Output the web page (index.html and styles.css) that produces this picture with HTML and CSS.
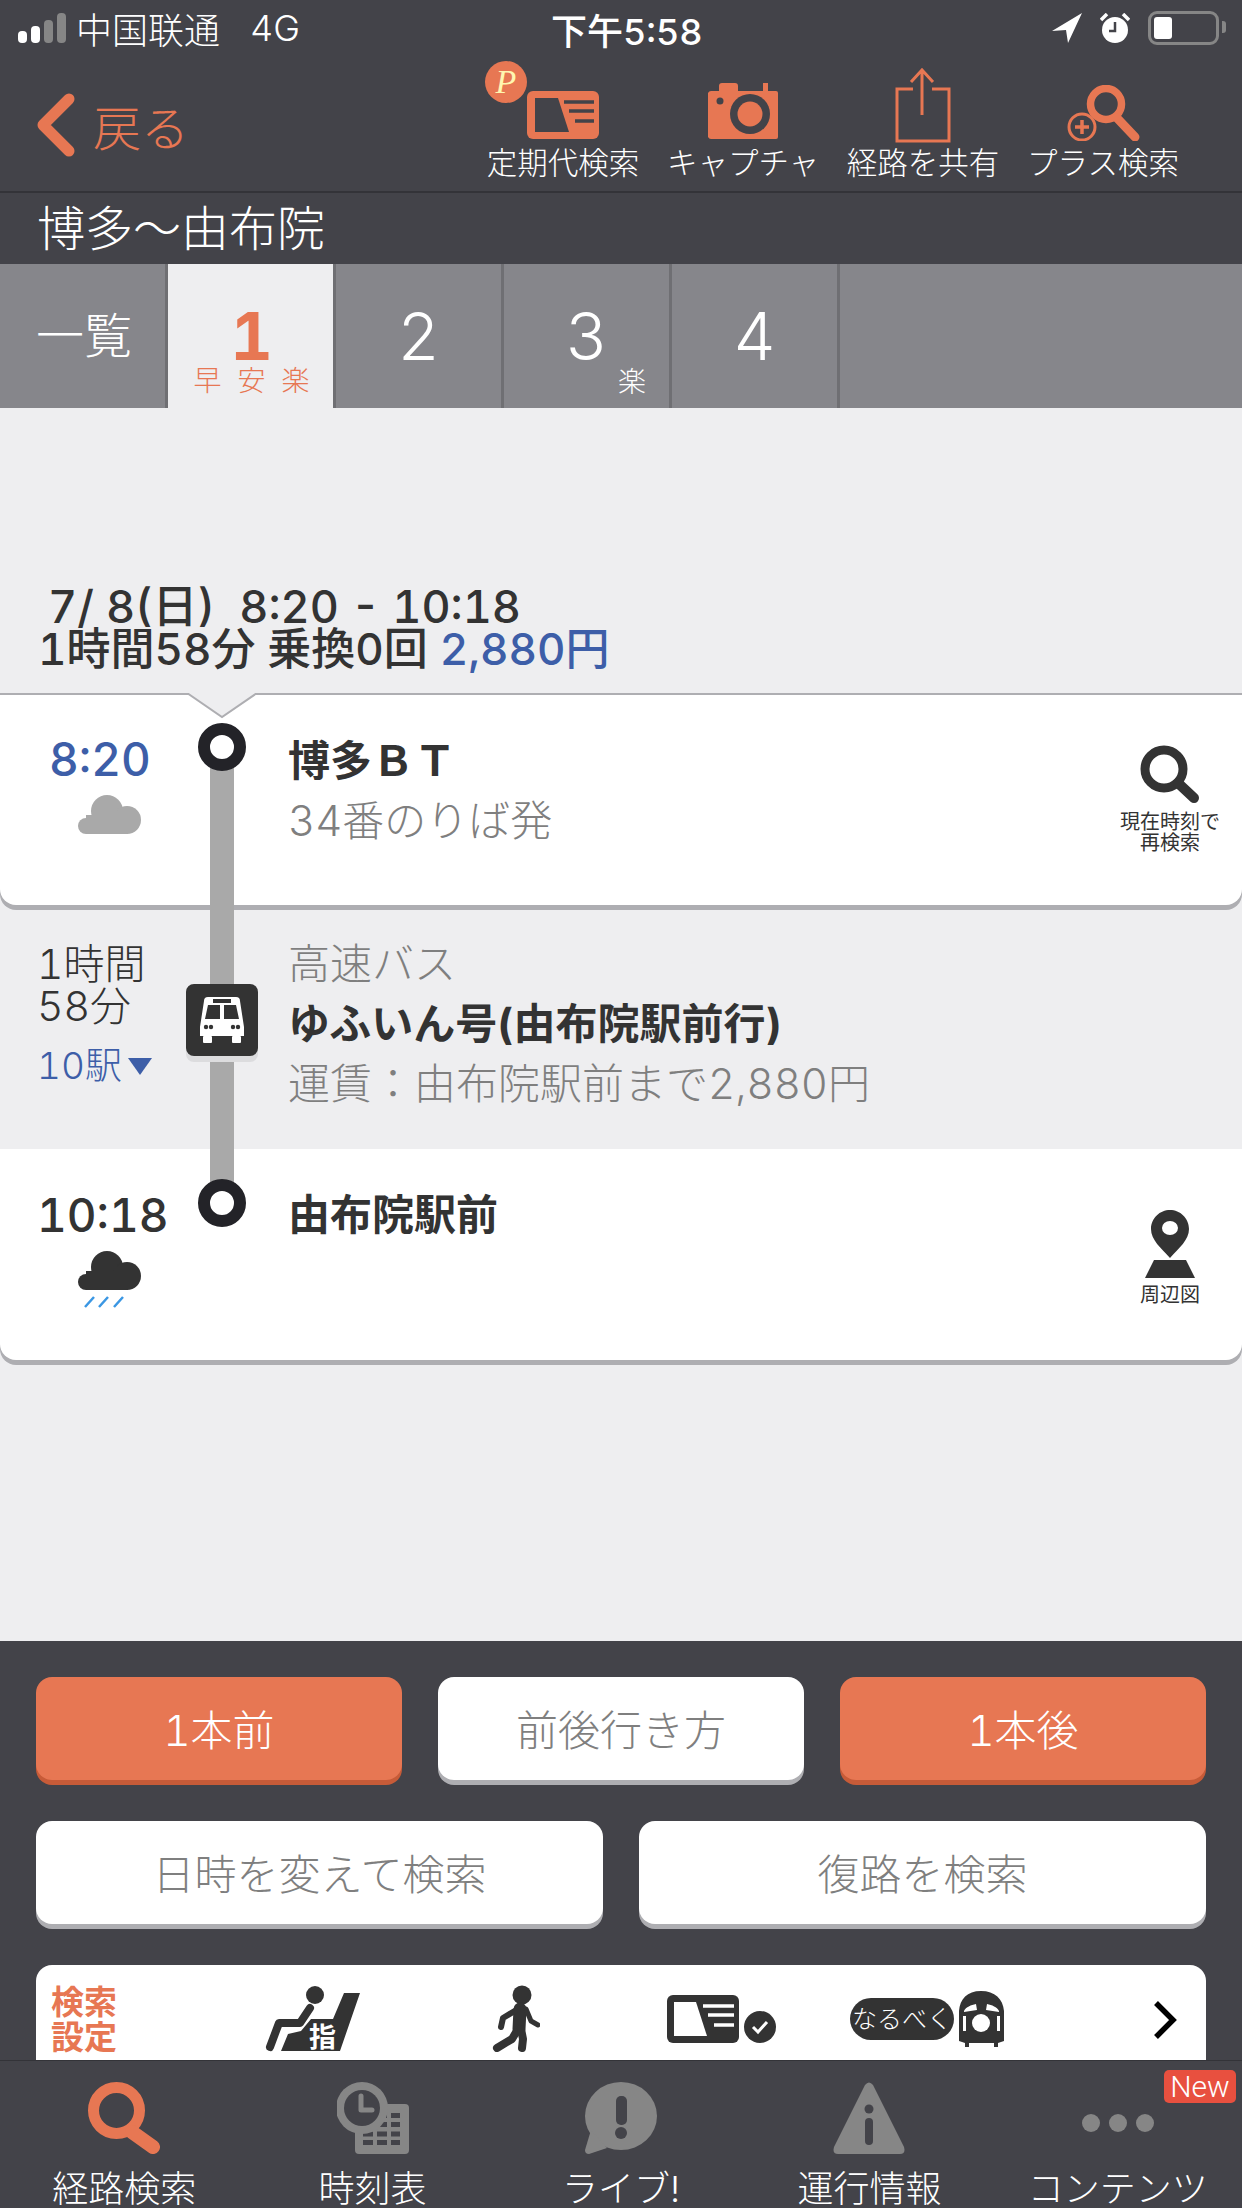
FILE: index.html
```html
<!DOCTYPE html>
<html lang="ja">
  <head>
    <meta charset="UTF-8" />
    <title>博多〜由布院</title>
    <link rel="stylesheet" href="styles.css">
  </head>
  <body>
    <header class="top">
      <div class="status">
        <div class="status-left">
          <span class="signal"><i class="on s1"></i><i class="on s2"></i><i class="s3"></i><i class="s4"></i></span>
          <span class="carrier">中国联通</span>
          <span class="net">4G</span>
        </div>
        <div class="clock">下午5:58</div>
        <div class="status-right">
          <svg width="30" height="30" viewBox="0 0 30 30"><path d="M0 18 30 0 16 30 14 17z" fill="#fff"/></svg>
          <svg width="30" height="30" viewBox="0 0 30 30">
            <circle cx="15" cy="17" r="13" fill="#fff"/>
            <path d="M15 9v9H9" fill="none" stroke="#434349" stroke-width="2.5"/>
            <path d="M1 7 7 1M29 7 23 1" stroke="#fff" stroke-width="3.5"/>
          </svg>
          <span class="battery"><i></i></span>
        </div>
      </div>
      <nav class="nav">
        <a class="back">
          <svg width="38" height="64" viewBox="0 0 38 64"><path d="M32 6 6 32l26 26" fill="none" stroke="#e77753" stroke-width="11" stroke-linecap="round" stroke-linejoin="round"/></svg>
          <span>戻る</span>
        </a>
        <div class="actions">
          <a class="action">
            <span class="action-icon">
              <span class="p-badge">P</span>
              <svg class="pass-icon" width="72" height="48" viewBox="0 0 72 48">
                <rect width="72" height="48" rx="6" fill="#e77753"/>
                <path d="M8 7h23l11 34H8z" fill="#434349"/>
                <path d="M37 11h30M42 20h25M48 30h19" stroke="#434349" stroke-width="3.5"/>
              </svg>
            </span>
            <span>定期代検索</span>
          </a>
          <a class="action">
            <span class="action-icon">
              <svg width="71" height="56" viewBox="0 0 71 56">
                <path d="M3 8h8V3q0-3 3-3h13q3 0 3 3v5h25V0h5v8h8q2 0 2 2v44q0 2-2 2H3q-2 0-3-2V10q1-2 3-2z" fill="#e77753"/>
                <circle cx="42" cy="31" r="20" fill="#434349"/>
                <circle cx="42" cy="31" r="12.5" fill="#e77753"/>
                <circle cx="12" cy="18" r="3.5" fill="#434349"/>
              </svg>
            </span>
            <span>キャプチャ</span>
          </a>
          <a class="action">
            <span class="action-icon">
              <svg class="icon-share" width="56" height="76" viewBox="0 0 56 76">
                <path d="M18 22H2v52h52V22H37M27 48V3M16 15 27 3l11 12" fill="none" stroke="#e77753" stroke-width="3"/>
              </svg>
            </span>
            <span>経路を共有</span>
          </a>
          <a class="action">
            <span class="action-icon">
              <svg class="icon-plus" width="73" height="56" viewBox="0 0 73 56">
                <circle cx="39" cy="19" r="15.5" fill="none" stroke="#e77753" stroke-width="7.5"/>
                <path d="M50 33 68 52" stroke="#e77753" stroke-width="9" stroke-linecap="round"/>
                <circle cx="15" cy="42" r="13" fill="#434349" stroke="#e77753" stroke-width="3"/>
                <path d="M15 35v14M8 42h14" stroke="#e77753" stroke-width="3.5"/>
              </svg>
            </span>
            <span>プラス検索</span>
          </a>
        </div>
      </nav>
      <h1 class="title">博多〜由布院</h1>
    </header>

    <div class="tabs">
      <div class="tab tab-list">一覧</div>
      <div class="tab active">
        <b>1</b>
        <small>早安楽</small>
      </div>
      <div class="tab">2</div>
      <div class="tab">3<small class="tab-tag">楽</small></div>
      <div class="tab">4</div>
      <div class="tab-rest"></div>
    </div>

    <main class="main">
      <div class="summary">
        <p class="summary-date">7/ 8(日)&nbsp; 8:20 - 10:18</p>
        <p>1時間58分 乗換0回 <span class="blue">2,880円</span></p>
      </div>

      <div class="route">
        <div class="route-line"></div>

        <section class="row card card-first">
          <svg class="notch" width="72" height="26" viewBox="0 0 72 26"><path d="M1 0 36 24 71 0" fill="#eeeef0" stroke="#aeaeb2" stroke-width="2"/></svg>
          <div class="time-col dep">
            <div class="time blue">8:20</div>
            <svg class="weather" width="64" height="40" viewBox="0 0 64 40" fill="#a9a9a9">
              <circle cx="29" cy="16" r="16"/><circle cx="49" cy="25" r="14"/><circle cx="8" cy="31" r="8"/><rect x="8" y="20" width="42" height="19"/>
            </svg>
          </div>
          <div class="axis"><span class="stop"></span></div>
          <div class="info">
            <div class="strong">博多ＢＴ</div>
            <div class="sub">34番のりば発</div>
          </div>
          <div class="side">
            <svg width="60" height="60" viewBox="0 0 60 60">
              <circle cx="24" cy="24" r="19" fill="none" stroke="#333" stroke-width="9"/>
              <path d="M38 38 54 53" stroke="#333" stroke-width="10" stroke-linecap="round"/>
            </svg>
            <span>現在時刻で<br>再検索</span>
          </div>
        </section>

        <section class="row leg">
          <div class="time-col">
            <div class="duration">1時間<br>58分</div>
            <div class="stations">10駅<i class="down"></i></div>
          </div>
          <div class="axis">
            <span class="bus">
              <svg width="46" height="46" viewBox="0 0 46 46">
                <path d="M9 0h28q4 0 4 4l4 26v9H1v-9L5 4q0-4 4-4z" fill="#fff"/>
                <rect x="14" y="2" width="18" height="4" fill="#333"/>
                <path d="M9 8h12v14H6zM25 8h12l3 14H25z" fill="#333"/>
                <circle cx="7" cy="30" r="2.2" fill="#333"/><circle cx="12" cy="30" r="2.2" fill="#333"/>
                <circle cx="34" cy="30" r="2.2" fill="#333"/><circle cx="39" cy="30" r="2.2" fill="#333"/>
                <rect x="4" y="39" width="9" height="7" rx="1" fill="#fff"/><rect x="33" y="39" width="9" height="7" rx="1" fill="#fff"/>
              </svg>
            </span>
          </div>
          <div class="info">
            <div class="sub">高速バス</div>
            <div class="strong">ゆふいん号(由布院駅前行)</div>
            <div class="sub">運賃：由布院駅前まで2,880円</div>
          </div>
        </section>

        <section class="row card card-last">
          <div class="time-col arr">
            <div class="time">10:18</div>
            <svg class="weather" width="64" height="58" viewBox="0 0 64 58">
              <g fill="#333"><circle cx="29" cy="16" r="16"/><circle cx="49" cy="25" r="14"/><circle cx="8" cy="31" r="8"/><rect x="8" y="20" width="42" height="19"/></g>
              <path d="M7 56 16 46M21 56 30 46M36 56 45 46" stroke="#3b97e3" stroke-width="2.5"/>
            </svg>
          </div>
          <div class="axis"><span class="stop"></span></div>
          <div class="info">
            <div class="strong">由布院駅前</div>
          </div>
          <div class="side side-map">
            <svg width="50" height="68" viewBox="0 0 50 68">
              <path d="M25 0c10 0 19 8 19 19 0 11-10 19-19 29C16 38 6 30 6 19 6 8 15 0 25 0z" fill="#333"/>
              <ellipse cx="25" cy="18" rx="8" ry="7" fill="#fff"/>
              <path d="M9 50h32l9 18H0z" fill="#333"/>
            </svg>
            <span>周辺図</span>
          </div>
        </section>
      </div>
    </main>

    <section class="panel">
      <div class="btn-row three">
        <a class="btn orange">1本前</a>
        <a class="btn">前後行き方</a>
        <a class="btn orange">1本後</a>
      </div>
      <div class="btn-row two">
        <a class="btn">日時を変えて検索</a>
        <a class="btn">復路を検索</a>
      </div>
      <div class="settings">
        <div class="settings-label">検索<br>設定</div>
        <svg class="ic-seat" width="96" height="65" viewBox="0 0 96 65">
          <circle cx="51" cy="8" r="9" fill="#333"/>
          <path d="M80 6h16L76 64H17l7-17 13-3 10-12h22z" fill="#333"/>
          <path d="M46 21 36 36H15L6 60" fill="none" stroke="#333" stroke-width="8" stroke-linecap="round" stroke-linejoin="round"/>
          <text x="45" y="60" class="seat-text">指</text>
        </svg>
        <svg class="ic-walk" width="48" height="67" viewBox="0 0 48 67" fill="none" stroke="#333" stroke-linecap="round" stroke-linejoin="round">
          <circle cx="30" cy="10" r="9.5" fill="#333" stroke="none"/>
          <path d="M28 24 27 44" stroke-width="13"/>
          <path d="M26 24 11 33 9 42" stroke-width="6"/>
          <path d="M34 24 39 36 46 40" stroke-width="5"/>
          <path d="M26 44 20 54 5 63" stroke-width="8"/>
          <path d="M29 44 31 54 30 63" stroke-width="8"/>
        </svg>
        <svg class="ic-pass" width="110" height="48" viewBox="0 0 110 48">
          <rect width="72" height="48" rx="6" fill="#333"/>
          <path d="M7 7h22l11 34H7z" fill="#fff"/>
          <path d="M36 11h31M41 20h26M47 30h20" stroke="#fff" stroke-width="3.5"/>
          <circle cx="93" cy="32" r="16" fill="#333"/>
          <path d="M86 32l5 5 9-10" fill="none" stroke="#fff" stroke-width="3"/>
        </svg>
        <div class="narubeku">
          <span class="pill">なるべく</span>
          <svg width="47" height="56" viewBox="0 0 47 56">
            <path d="M23 0c14 0 22 8 23 20v30l-6 2v4h-4v-4H11v4H7v-4l-6-2V20C2 8 9 0 23 0z" fill="#333"/>
            <path d="M6 20c2-4 7-6 12-7l1 6-13 2zM41 20c-2-4-7-6-12-7l-1 6 13 2z" fill="#fff"/>
            <circle cx="23" cy="32" r="9" fill="#fff"/>
            <rect x="5" y="25" width="3" height="15" fill="#fff"/><rect x="39" y="25" width="3" height="15" fill="#fff"/>
          </svg>
        </div>
        <svg class="ic-next" width="24" height="38" viewBox="0 0 24 38"><path d="M3 2 20 19 3 36" fill="none" stroke="#000" stroke-width="5.5"/></svg>
      </div>
    </section>

    <footer class="tabbar">
      <a class="tabbar-item current">
        <svg width="72" height="72" viewBox="0 0 72 72">
          <circle cx="28.500" cy="28.500" r="23" fill="none" stroke="#e77753" stroke-width="11"/>
          <path d="M44 50 65 65" stroke="#e77753" stroke-width="14" stroke-linecap="round"/>
        </svg>
        <span>経路検索</span>
      </a>
      <a class="tabbar-item">
        <svg width="72" height="72" viewBox="0 0 72 72">
          <rect x="18" y="22" width="54" height="50" rx="4" fill="#868686"/>
          <path d="M26 33.500h10M40 33.500h10M54 33.500h9M26 42.500h10M40 42.500h10M54 42.500h9M26 52h10M40 52h10M54 52h9M26 60.500h10M40 60.500h10M54 60.500h9" stroke="#434349" stroke-width="5"/>
          <circle cx="25" cy="26" r="26" fill="#868686"/>
          <circle cx="25" cy="26" r="18" fill="#434349"/>
          <path d="M24 14v14h11" fill="none" stroke="#868686" stroke-width="5" stroke-linecap="round" stroke-linejoin="round"/>
        </svg>
        <span>時刻表</span>
      </a>
      <a class="tabbar-item">
        <svg width="72" height="72" viewBox="0 0 72 72">
          <ellipse cx="36" cy="34" rx="36" ry="34" fill="#868686"/>
          <path d="M6 48 0 68q0 4 4 4l18-6z" fill="#868686"/>
          <rect x="31" y="14" width="11" height="29" rx="5" fill="#434349"/>
          <circle cx="36" cy="51" r="6" fill="#434349"/>
        </svg>
        <span>ライブ!</span>
      </a>
      <a class="tabbar-item">
        <svg width="72" height="72" viewBox="0 0 72 72">
          <path d="M32 3q4-5 8 0l31 62q2 7-4 7H5q-6 0-4-7z" fill="#868686"/>
          <circle cx="36" cy="27" r="4.500" fill="#434349"/>
          <rect x="32" y="36" width="8" height="27" rx="4" fill="#434349"/>
        </svg>
        <span>運行情報</span>
      </a>
      <a class="tabbar-item">
        <svg width="72" height="72" viewBox="0 0 72 72" fill="#868686">
          <circle cx="9" cy="41" r="9"/><circle cx="36" cy="41" r="9"/><circle cx="63" cy="41" r="9"/>
        </svg>
        <span>コンテンツ</span>
        <em class="new">New</em>
      </a>
    </footer>
  </body>
</html>
```

FILE: styles.css
```css
* {
  box-sizing: border-box;
}

html,
body {
  margin: 0;
  padding: 0;
}

body {
  width: 1242px;
  height: 2208px;
  overflow: hidden;
  background: #eeeef0;
  color: #333;
  font-family: Inter, "Noto Sans CJK JP", sans-serif;
  font-weight: 300;
  font-variant-numeric: tabular-nums;
}

p,
h1 {
  margin: 0;
}

.blue {
  color: #3d5ea8;
}

/* header */
.top {
  background: #434349;
  color: #fff;
}

.status {
  height: 64px;
  display: flex;
  align-items: center;
  justify-content: space-between;
  padding: 0 23px 8px 18px;
  position: relative;
}

.status-left {
  display: flex;
  align-items: center;
  font-size: 36px;
  font-family: Inter, "Noto Sans CJK SC", sans-serif;
}

.signal {
  display: flex;
  align-items: flex-end;
  gap: 4px;
  height: 30px;
  margin-right: 10px;
}

.signal i {
  width: 9px;
  border-radius: 4px;
  background: #868686;
}

.signal .on {
  background: #fff;
}

.s1 { height: 12px; }
.s2 { height: 17px; }
.s3 { height: 23px; }
.s4 { height: 30px; }

.net {
  margin-left: 30px;
}

.clock {
  position: absolute;
  left: 551px;
  top: 3px;
  font-size: 36px;
  font-weight: 500;
  font-family: Inter, "Noto Sans CJK SC", sans-serif;
}

.status-right {
  display: flex;
  align-items: center;
  gap: 18px;
}

.battery {
  width: 71px;
  height: 34px;
  border: 3px solid #868686;
  border-radius: 9px;
  padding: 3px;
  position: relative;
}

.battery i {
  display: block;
  width: 18px;
  height: 22px;
  background: #fff;
  border-radius: 3px;
}

.battery::after {
  content: "";
  position: absolute;
  right: -10px;
  top: 7px;
  width: 4px;
  height: 12px;
  background: #868686;
  border-radius: 0 3px 3px 0;
}

.nav {
  height: 129px;
  border-bottom: 2px solid #333338;
  display: flex;
  justify-content: space-between;
  padding: 0 49px 0 37px;
}

.back {
  display: flex;
  align-items: center;
  gap: 18px;
  color: #e77753;
  font-size: 48px;
  padding-bottom: 6px;
}

.actions {
  display: flex;
}

.action {
  width: 180px;
  height: 116px;
  display: flex;
  flex-direction: column;
  align-items: center;
  justify-content: flex-end;
  font-size: 30.500px;
  line-height: 34px;
}

.action-icon {
  height: 76px;
  margin-bottom: 7px;
  display: flex;
  align-items: flex-end;
  position: relative;
}

.icon-share {
  margin-bottom: -4px;
}

.icon-plus {
  margin-bottom: -2px;
}

.p-badge {
  position: absolute;
  left: -42px;
  top: -3px;
  width: 42px;
  height: 42px;
  border-radius: 50%;
  background: #e77753;
  color: #fff6b0;
  font-family: "Liberation Serif", serif;
  font-style: italic;
  font-size: 34px;
  line-height: 42px;
  text-align: center;
}

.title {
  height: 71px;
  padding-left: 37px;
  font-size: 48px;
  font-weight: 300;
  line-height: 72px;
}

/* result tabs */
.tabs {
  height: 144px;
  display: flex;
  background: #86868b;
  color: #fff;
}

.tab {
  width: 168px;
  border-right: 3px solid #6f6f73;
  display: flex;
  flex-direction: column;
  align-items: center;
  padding-top: 26px;
  font-size: 66px;
  line-height: 92px;
  position: relative;
}

.tab-list {
  font-size: 48px;
  padding-left: 3px;
}

.tab.active {
  background: #eeeef0;
  color: #e77753;
  border-right-color: #6f6f73;
  border-left: 2px solid #6f6f73;
  margin-left: -2px;
  padding-left: 2px;
  width: 170px;
}

.tab.active b {
  font-weight: 700;
  line-height: 92px;
  height: 76px;
}

.tab.active small {
  font-size: 28px;
  line-height: 30px;
  letter-spacing: 16px;
  margin-right: -16px;
}

.tab-tag {
  position: absolute;
  right: 23px;
  bottom: 10px;
  font-size: 28px;
  line-height: 32px;
}

/* route */
.main {
  height: 1233px;
  display: flex;
  flex-direction: column;
  justify-content: flex-end;
}

.summary {
  padding: 0 0 22px 38px;
  font-size: 44px;
  font-weight: 500;
  line-height: 43px;
}

.summary-date {
  padding-left: 10px;
  font-size: 45px;
}

.route {
  position: relative;
  height: 676px;
  flex: none;
  margin-bottom: 272px;
}

.route-line {
  position: absolute;
  left: 210px;
  top: 60px;
  width: 24px;
  height: 444px;
  background: #a9a9a9;
  z-index: 1;
}

.row {
  display: flex;
  position: relative;
}

.card {
  background: #fff;
  border-radius: 0 0 16px 16px;
  box-shadow: 0 5px 0 #aeaeb2;
}

.card-first {
  height: 212px;
  border-top: 2px solid #aeaeb2;
  padding-top: 34px;
}

.card-first .info {
  margin-top: 2px;
}

.leg {
  height: 239px;
  margin-top: 5px;
  padding-top: 24px;
}

.card-last {
  height: 211px;
  padding-top: 36px;
  margin-top: 0;
}

.notch {
  position: absolute;
  left: 186px;
  top: -2px;
}

.time-col {
  width: 186px;
  flex: none;
}

.time {
  font-size: 46px;
  font-weight: 500;
  line-height: 60px;
}

.dep .time {
  padding-left: 49px;
}

.arr .time {
  padding-left: 37px;
}

.weather {
  display: block;
  margin: 6px 0 0 78px;
}

.duration {
  font-size: 41px;
  line-height: 42px;
  padding: 9px 0 0 37px;
}

.stations {
  color: #3d5ea8;
  font-size: 37px;
  line-height: 50px;
  padding: 14px 0 0 37px;
  display: flex;
  align-items: center;
}

.down {
  width: 0;
  height: 0;
  margin-left: 6px;
  border-left: 12px solid transparent;
  border-right: 12px solid transparent;
  border-top: 17px solid #3d5ea8;
}

.axis {
  width: 102px;
  flex: none;
  position: relative;
  z-index: 2;
}

.stop {
  display: block;
  width: 48px;
  height: 48px;
  margin: -6px 0 0 12px;
  border: 12px solid #232328;
  border-radius: 50%;
  background: #fff;
}

.bus {
  width: 72px;
  height: 72px;
  margin-top: 50px;
  background: #333;
  border-radius: 8px;
  box-shadow: 0 6px 0 #dcdcde;
  display: flex;
  align-items: center;
  justify-content: center;
}

.info {
  font-size: 42px;
  line-height: 60px;
}

.strong {
  font-weight: 700;
}

.sub {
  color: #7f7f7f;
}

.side {
  position: absolute;
  right: 0;
  top: 50px;
  width: 144px;
  display: flex;
  flex-direction: column;
  align-items: center;
  font-size: 20px;
  font-weight: 400;
  line-height: 21px;
  text-align: center;
}

.side svg {
  margin-bottom: 7px;
}

.side-map {
  top: 61px;
}

/* bottom panel */
.panel {
  height: 419px;
  padding: 36px 36px 0;
  background: #434349;
  overflow: hidden;
}

.btn-row {
  display: grid;
  gap: 36px;
  margin-bottom: 41px;
}

.three {
  grid-template-columns: repeat(3, 1fr);
}

.two {
  grid-template-columns: repeat(2, 1fr);
}

.btn {
  height: 103px;
  border-radius: 16px;
  background: #fff;
  box-shadow: 0 5px 0 #aeaeb2;
  color: #7f7f7f;
  font-size: 42px;
  line-height: 107px;
  text-align: center;
}

.btn.orange {
  background: #e77753;
  box-shadow: 0 5px 0 #c75b38;
  color: #fff;
}

.settings {
  height: 96px;
  background: #fff;
  border-radius: 16px 16px 0 0;
  position: relative;
  display: flex;
  align-items: flex-start;
  padding-left: 15px;
}

.settings-label {
  width: 213px;
  padding-top: 20px;
  color: #e77753;
  font-size: 33px;
  font-weight: 700;
  line-height: 35px;
}

.ic-seat {
  margin-top: 22px;
  overflow: visible;
}

.ic-walk {
  margin: 20px 0 0 132px;
}

.ic-pass {
  margin: 30px 0 0 127px;
}

.narubeku {
  display: flex;
  align-items: center;
  gap: 4px;
  margin: 26px 0 0 73px;
}

.pill {
  width: 104px;
  height: 42px;
  border-radius: 21px;
  background: #333;
  color: #fff;
  font-size: 25px;
  line-height: 42px;
  text-align: center;
}

.ic-next {
  margin: 36px 0 0 148px;
}

.seat-text {
  fill: #fff;
  font-size: 27px;
  font-weight: 700;
}

/* bottom navigation */
.tabbar {
  height: 148px;
  background: #434349;
  border-top: 1px solid #333338;
  display: grid;
  grid-template-columns: repeat(5, 1fr);
  color: #fff;
  position: relative;
}

.tabbar-item {
  display: flex;
  flex-direction: column;
  align-items: center;
  padding-top: 21px;
  font-size: 36px;
  line-height: 46px;
  position: relative;
}

.tabbar-item svg {
  margin-bottom: 12px;
}

.new {
  position: absolute;
  right: 6px;
  top: 9px;
  width: 72px;
  height: 33px;
  border-radius: 5px;
  background: #e8503f;
  font-family: Roboto, sans-serif;
  font-style: normal;
  font-size: 30px;
  line-height: 33px;
  text-align: center;
}
```
